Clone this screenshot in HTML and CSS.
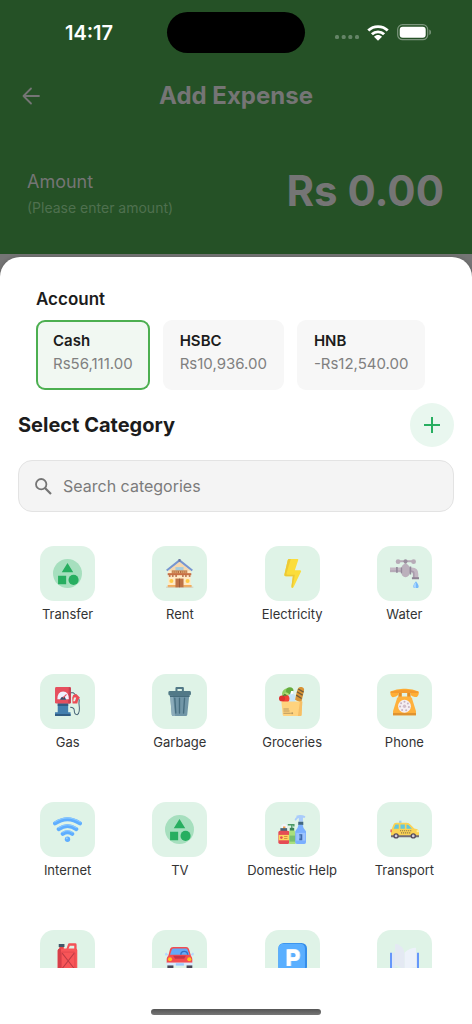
FILE: index.html
```html
<!DOCTYPE html>
<html lang="en">
<head>
<meta charset="utf-8">
<meta name="viewport" content="width=device-width, initial-scale=1">
<title>Add Expense</title>
<link rel="stylesheet" href="styles.css">
</head>
<body>
<div class="app">
  <header class="top">
    <div class="status">
      <span class="time">14:17</span>
      <span class="island"></span>
      <span class="signals">
        <svg width="24" height="5" viewBox="0 0 24 5" fill="#658467"><rect x="0" y="0" width="4" height="4" rx="1.5"/><rect x="6.700" width="4" height="4" rx="1.500"/><rect x="13.300" width="4" height="4" rx="1.500"/><rect x="20" width="4" height="4" rx="1.500"/></svg>
        <svg class="wifi" width="22" height="16" viewBox="0 0 22 16" fill="none" stroke="#fff" stroke-width="2.900"><path d="M1.300 5.500C6.700.3 15.300.3 20.700 5.500"/><path d="M4.900 9.300c3.400-3.300 8.800-3.300 12.200 0"/><path d="M7 11.700c2.200-2.200 5.800-2.200 8 0L11 15.700z" fill="#fff" stroke="none"/></svg>
        <svg width="35" height="17" viewBox="0 0 35 17"><rect x=".7" y=".7" width="30" height="15" rx="4.800" fill="none" stroke="#7c967d" stroke-width="1.200"/><rect x="2.700" y="2.700" width="26" height="11" rx="3" fill="#fff"/><path d="M32.300 5.500c2.200.7 2.200 4.800 0 5.500z" fill="#7c967d"/></svg>
      </span>
    </div>
    <div class="titlebar">
      <button class="back" type="button" aria-label="Back">
        <svg width="18" height="18" viewBox="0 0 18 18" fill="none" stroke="#757575" stroke-width="1.800" stroke-linecap="round" stroke-linejoin="round"><path d="M17 9H1.500M9 1.500 1.500 9 9 16.500"/></svg>
      </button>
      <h1>Add Expense</h1>
    </div>
    <div class="amount">
      <div><p class="amount-label">Amount</p><p class="amount-hint">(Please enter amount)</p></div>
      <strong class="amount-value">Rs 0.00</strong>
    </div>
  </header>

  <main class="sheet">
    <section class="accounts">
      <h2>Account</h2>
      <div class="account-list">
        <button type="button" class="account selected"><b>Cash</b><span>Rs56,111.00</span></button>
        <button type="button" class="account"><b>HSBC</b><span>Rs10,936.00</span></button>
        <button type="button" class="account"><b>HNB</b><span>-Rs12,540.00</span></button>
      </div>
    </section>
    <div class="category-head">
      <h2>Select Category</h2>
      <button class="add" type="button" aria-label="Add category">
        <svg width="16" height="16" viewBox="0 0 16 16" fill="none" stroke="#27ae60" stroke-width="2"><path d="M8 0v16M0 8h16"/></svg>
      </button>
    </div>
    <label class="search">
      <svg width="17" height="17" viewBox="0 0 17 17" fill="none" stroke="#757575" stroke-width="1.800"><circle cx="6.200" cy="6.200" r="5.200"/><path d="m10 10 6 6" stroke-width="2.200"/></svg>
      <input type="search" placeholder="Search categories" aria-label="Search categories">
    </label>

    <div class="grid">
      <button type="button" class="cat"><span class="tile">
        <svg viewBox="0 0 86 86"><circle cx="43" cy="43" r="43" fill="#a6dfbe"/><path d="M43 12 60 39H26zM15 50h24v25H15z" fill="#27ae60"/><circle cx="61" cy="62" r="15" fill="#27ae60"/></svg>
      </span>Transfer</button>
      <button type="button" class="cat"><span class="tile">
        <svg viewBox="0 0 86 86"><path d="M10 35 43 8l33 27v48H10z" fill="#ffe9c5"/><path d="M43 8 76 35H10z" fill="#f8d8ad"/><path d="M8 77h30v7H8zM54 77h25v7H54z" fill="#f5ad5a"/><path d="M3 83.500h81" stroke="#cbb7a5" stroke-width="2"/><path d="M31 24h24v10H31z" fill="#a7cddd"/><path d="M20 34h46v9H20z" fill="#b56d3f"/><path d="M24 36v6m6-6v6m6-6v6m7-6v6m7-6v6m6-6v6m6-6v6" stroke="#ffd59a" stroke-width="2"/><path d="M8 42h70v6H8z" fill="#c86f43"/><path d="M14 48v5m9-5v5m10-5v5m20-5v5m9-5v5m11-5v5" stroke="#a85a39" stroke-width="5"/><path d="M31 58h24v26H31z" fill="#bd7246"/><path d="M43 58v26" stroke="#8c5037" stroke-width="2"/><circle cx="19" cy="65" r="6" fill="#ffca45"/><circle cx="67" cy="65" r="6" fill="#ffca45"/><path d="M5 34 43 4l38 30" fill="none" stroke="#7896cf" stroke-width="6"/><path d="M40 0h6v8h-6z" fill="#6d789f"/></svg>
      </span>Rent</button>
      <button type="button" class="cat"><span class="tile">
        <svg viewBox="0 0 86 86"><path d="M33 0h25q3 0 2 3L50 33h15q5 0 3 5L46 84q-6 5-6-2l4-31H23q-5 0-4-5L29 3q1-3 4-3z" fill="#fbdd3b"/><path d="M33 0h5L25 43q-1 4 4 4h21l-7 38q-4 0-3-5l4-29H23q-5 0-4-5L29 3q1-3 4-3z" fill="#ecc936"/></svg>
      </span>Electricity</button>
      <button type="button" class="cat"><span class="tile">
        <svg viewBox="0 0 86 86"><path d="M24 7h43M46 7v17" stroke="#b7abb7" stroke-width="6"/><circle cx="24" cy="8" r="7" fill="#b7abb7"/><circle cx="70" cy="8" r="7" fill="#b7abb7"/><circle cx="46" cy="7" r="6" fill="#998d9d"/><path d="M0 25h65q19 0 19 20v12H68V44q0-5-7-5H0z" fill="#c2b7c2"/><path d="M0 37h61q7 0 7 7v13h5V42q0-8-9-8H0z" fill="#a99dad"/><ellipse cx="46" cy="34" rx="14" ry="20" fill="#bbb0bc"/><path d="M18 24h5v17h-5zM32 25h4v17h-4zM58 22h5v24h-5z" fill="#93889a"/><path d="M65 54h21v6H65z" fill="#8e8394"/><path d="M77 66q8 10 8 14a8 8 0 0 1-16 0q0-4 8-14z" fill="#76b9fa"/><path d="M77 70v17q-7-1-7-7 0-4 7-10z" fill="#a8d6ff"/></svg>
      </span>Water</button>

      <button type="button" class="cat"><span class="tile">
        <svg viewBox="0 0 86 86"><path d="M53 17h7l14 13q5 6 3 19 4 29-5 33-9 0-9-13 0-9-12-9" fill="none" stroke="#456276" stroke-width="3"/><path d="M14 48h31v27h7v11H6V75h8z" fill="#447fae"/><path d="M14 48h31v8H14zM6 80h46v6H6z" fill="#315d84"/><rect x="6" width="47" height="49" rx="4" fill="#e64f5e"/><path d="M47 1h3q3 0 3 4v40q0 4-4 4h-4z" fill="#c73f52"/><path d="M13 36q0-23 17-23t17 23z" fill="#f0f1ff"/><path d="M21 38q3-12 14-8l4 8z" fill="#324e6a"/><path d="m29 33 11-11" stroke="#e64f5e" stroke-width="3"/><path d="m60 24 9-3 11 11-5 5-3 12H58l-1-17z" fill="#ed4c55"/><path d="M62 31h7l-4 11h-5z" fill="#dff3e8"/></svg>
      </span>Gas</button>
      <button type="button" class="cat"><span class="tile">
        <svg viewBox="0 0 86 86"><path d="M15 24h57l-6 58q0 4-5 4H25q-5 0-5-4z" fill="#7196a7"/><path d="M15 24h8l7 62h-5q-5 0-5-4z" fill="#8cacba"/><path d="m29 33 3 44M43 33v44M58 33l-3 44" stroke="#466d7f" stroke-width="4" stroke-linecap="round"/><path d="M31 12V3q0-3 3-3h19q3 0 3 3v9h-6V6H37v6z" fill="#527987"/><rect x="10" y="12" width="67" height="13" rx="4" fill="#527987"/><path d="M14 25h59v5H15z" fill="#456b7a"/></svg>
      </span>Garbage</button>
      <button type="button" class="cat"><span class="tile">
        <svg viewBox="0 0 86 86"><circle cx="28" cy="20" r="16" fill="#8ccd61"/><circle cx="35" cy="12" r="11" fill="#64ac3e"/><circle cx="24" cy="25" r="9" fill="#b4df7a"/><path d="m50 38 8-31q4-9 13-7 8 2 6 11L69 47z" fill="#d99436"/><path d="m56 14 17 10M54 24l16 10M60 6l16 9" stroke="#705b3b" stroke-width="4"/><path d="m39 12-3 8-6 6v20h21V26l-5-6V12z" fill="#c7e5f8"/><path d="m39 12h7v7l-8 3z" fill="#fff"/><circle cx="22" cy="35" r="12" fill="#ef4136"/><circle cx="12" cy="34" r="9" fill="#dd312f"/><path d="m15 27 5-5 5 4" fill="none" stroke="#548b38" stroke-width="4"/><path d="M10 43h62l-2 40q0 3-4 3H18q-4 0-4-3z" fill="#ffd37e"/><path d="M65 43h7l-2 40q0 3-4 3h-7z" fill="#f6be65"/><path d="M16 65h16M16 71h18M16 78h22" stroke="#b9985e" stroke-width="3"/><circle cx="42" cy="78" r="3" fill="#b9985e"/></svg>
      </span>Groceries</button>
      <button type="button" class="cat"><span class="tile">
        <svg viewBox="0 0 86 86"><path d="M25 18h10v16H25zM51 18h10v16H51z" fill="#e38d23"/><path d="M27 28h32q4 0 6 5l12 38v13H9V71l12-38q2-5 6-5z" fill="#ffb13c"/><path d="M9 77h68v7H9z" fill="#df9330"/><path d="M1 13Q22 4 43 5q22-1 42 8 2 11-5 17-14 0-18-6l-1-6H25l-1 6q-6 7-18 6-6-5-5-17z" fill="#ffae35"/><path d="M3 13q40-9 80 0l1 5H2z" fill="#f49b2e"/><circle cx="43" cy="57" r="19" fill="#f4eef2"/><circle cx="43" cy="57" r="5" fill="#d2bec8"/><g fill="#c6b2bf"><circle cx="43" cy="44" r="3"/><circle cx="53" cy="49" r="3"/><circle cx="56" cy="59" r="3"/><circle cx="48" cy="69" r="3"/><circle cx="36" cy="68" r="3"/><circle cx="30" cy="58" r="3"/><circle cx="33" cy="48" r="3"/></g></svg>
      </span>Phone</button>

      <button type="button" class="cat"><span class="tile">
        <svg viewBox="0 0 86 86" fill="none" stroke="#5faeff" stroke-width="12" stroke-linecap="round"><path d="M6 25q37-25 74 0M17 42q26-19 52 0M29 56q14-10 28 0"/><path d="M5 21q38-24 76 0M16 38q27-18 54 0M29 51q14-8 28 0" stroke="#8cc9ff" stroke-width="3"/><circle cx="43" cy="72" r="8" fill="#5faeff" stroke="none"/><circle cx="41" cy="69" r="3" fill="#94ceff" stroke="none"/></svg>
      </span>Internet</button>
      <button type="button" class="cat"><span class="tile">
        <svg viewBox="0 0 86 86"><circle cx="43" cy="43" r="43" fill="#a6dfbe"/><path d="M43 12 60 39H26zM15 50h24v25H15z" fill="#27ae60"/><circle cx="61" cy="62" r="15" fill="#27ae60"/></svg>
      </span>TV</button>
      <button type="button" class="cat"><span class="tile">
        <svg viewBox="0 0 86 86"><path d="M10 40V31q8-10 17 0v9z" fill="#f0f5fb"/><path d="M15 34h7v7h-7z" fill="#f69c45"/><path d="M7 39h20v10H7z" fill="#4b6176"/><rect x="1" y="47" width="33" height="39" rx="5" fill="#e54b55"/><path d="M2 59h32v16H2z" fill="#ffd35e"/><circle cx="10" cy="67" r="4" fill="#e54b55"/><path d="M18 64h10m-10 6h10" stroke="#d88c42" stroke-width="3"/><path d="M31 31v-2h16v5M41 30v15" fill="none" stroke="#4a9865" stroke-width="4"/><path d="M35 38h13v10H35z" fill="#388155"/><path d="M35 46h14l4 10v26q0 4-4 4H33V53z" fill="#a9df7e"/><path d="M34 61h17v18H34z" fill="#78bf70"/><path d="M53 3q14-6 28 1l-1 4h-6v12H62V9q-5 0-9 8l-4-2q2-8 7-10z" fill="#a9ccfb"/><path d="M60 20h15v10H60z" fill="#426780"/><path d="M61 29h12q1 11 10 19v33q0 5-5 5H56q-5 0-5-5V48q8-7 10-19z" fill="#7aafff"/><path d="M54 53h27v23H54z" fill="#9bc3ff"/><path d="M63 57h9v18h-9z" fill="#3d68a9"/><path d="M65 60v10" stroke="#8dc1fa" stroke-width="3"/></svg>
      </span>Domestic Help</button>
      <button type="button" class="cat"><span class="tile">
        <svg viewBox="0 0 86 86"><path d="M27 17h7v7h-7z" fill="#9acdf5"/><path d="M3 47 10 29q2-6 8-6h32q6 0 11 6l11 11q13 2 15 9l-1 13H3z" fill="#fbd354"/><path d="m11 41 5-13h10v13zM31 28h13v13H31zM49 28q6 0 10 6l6 7H49z" fill="#63c6dc"/><path d="M3 60h83v6H3z" fill="#736d76"/><path d="M30 47h33m-30 6h27" stroke="#7a6a4a" stroke-width="3" stroke-dasharray="3 3"/><circle cx="18" cy="62" r="8" fill="#554a5c"/><circle cx="69" cy="62" r="8" fill="#554a5c"/><circle cx="18" cy="62" r="4" fill="#d4cedb"/><circle cx="69" cy="62" r="4" fill="#d4cedb"/><path d="M1 43h5v8H1z" fill="#ed7161"/><path d="M79 45h7v6h-7z" fill="#fff0a2"/></svg>
      </span>Transport</button>

      <button type="button" class="cat" aria-label="Fuel"><span class="tile">
        <svg viewBox="0 0 86 86"><path d="M17 3h17v9H17z" fill="#405768"/><path d="M19 12h13v8H19z" fill="#e8403f"/><path d="M39 20 44 5q1-4 5-4h17q4 0 4 4v16h-7V8H50l-5 12z" fill="#f35257"/><path d="M19 16h48q5 0 5 6v64H14V23q0-4 5-7z" fill="#f85558"/><path d="M14 22q0-5 5-6h5v70H14z" fill="#d73f49"/><rect x="25" y="27" width="40" height="51" rx="3" fill="none" stroke="#d9424b" stroke-width="2"/><path d="m27 30 36 46M63 30 27 76" stroke="#bd3b45" stroke-width="3"/></svg>
      </span></button>
      <button type="button" class="cat" aria-label="Vehicle"><span class="tile">
        <svg viewBox="0 0 86 86"><path d="M7 66h18v8H7zM64 66h17v8H64z" fill="#474656"/><path d="M1 37q-3-7 3-9l7 8zM84 37q4-7-2-9l-7 8z" fill="#b4d7ff"/><path d="M10 37 15 18q2-6 9-6h39q6 0 8 6l6 20q4 5 4 10v12H5V47q0-5 5-10z" fill="#f34c50"/><path d="M15 35 20 20q1-4 6-4h36q4 0 5 4l6 15z" fill="#62a9f8"/><path d="M47 35q0-10 10-10t10 10" fill="none" stroke="#316fc4" stroke-width="4"/><path d="M24 38h38l-5 9H30z" fill="#c43446"/><path d="M4 58h79v8H4z" fill="#d9eaff"/><path d="M32 60h24v7H32z" fill="#9bc9ff"/><circle cx="15" cy="48" r="6" fill="#ffc51f"/><circle cx="72" cy="48" r="6" fill="#ffc51f"/></svg>
      </span></button>
      <button type="button" class="cat" aria-label="Parking"><span class="tile">
        <svg viewBox="0 0 86 86"><rect x="1" width="85" height="86" rx="16" fill="#348de9"/><rect x="1" y="2" width="79" height="83" rx="14" fill="#5aafff"/><path d="M34 68V24h15q12 0 12 12t-12 12H34" fill="none" stroke="#d7e6f7" stroke-width="11"/><path d="M31 68V24h15q12 0 12 12T46 48H31" fill="none" stroke="#fff" stroke-width="11"/></svg>
      </span></button>
      <button type="button" class="cat" aria-label="Education"><span class="tile">
        <svg viewBox="0 0 86 86"><path d="M0 29h6v57H0zM80 29h6v57h-6z" fill="#6697fa"/><path d="M6 28h9v47q18-2 28 8 14-12 34-10V28h3v58H6z" fill="#dfe8f5"/><path d="M43 29q15-15 34-15v58q-20 0-34 12z" fill="#edf2fa"/><path d="M8 75q20-5 35 8 14-12 36-8v5q-22-2-36 6-14-8-35-6z" fill="#c3d3e6"/><path d="M15 4q8-3 15 4 11 6 13 24v50Q33 70 15 65z" fill="#e4e9f3"/></svg>
      </span></button>
    </div>
    <div class="bottom"><span class="home"></span></div>
  </main>
</div>
</body>
</html>
```
FILE: styles.css
```css
* { box-sizing: border-box; }
body { margin: 0; font-family: Inter, "Liberation Sans", sans-serif; color: #1c1c1c; background: #fff; }
h1, h2, p { margin: 0; }
button { margin: 0; padding: 0; border: 0; background: none; font: inherit; color: inherit; cursor: pointer; }
svg { display: block; flex: none; }

.app { display: flex; flex-direction: column; height: 100vh; overflow: hidden; background: #757575; }
.top { flex: none; background: #255126; margin-bottom: 3px; padding-bottom: 36px; }

.status { display: grid; grid-template-columns: 1fr 138px 1fr; align-items: center; padding-top: 12px; }
.time { padding: 0 0 0 11px; text-align: center; font-size: 20px; line-height: 24px; font-weight: 600; color: #fff; }
.island { height: 41px; border-radius: 21px; background: #000; }
.signals { display: flex; align-items: center; justify-content: flex-end; gap: 8px; padding-right: 40px; }
.signals svg:first-child { margin-top: 10px; }

.titlebar { display: grid; grid-template-columns: 44px 1fr 44px; align-items: center; margin-top: 27px; padding: 0 9px; }
.back { display: flex; align-items: center; justify-content: center; height: 32px; }
.titlebar h1 { text-align: center; font-size: 24px; line-height: 32px; font-weight: 700; color: #757575; }

.amount { display: flex; justify-content: space-between; align-items: flex-start; padding: 55px 28px 0 27px; }
.amount-label { margin-top: 3px; font-size: 18px; line-height: 24px; color: #757575; }
.amount-hint { margin-top: 4px; font-size: 14px; line-height: 20px; color: #4f704f; }
.amount-value { font-size: 42px; line-height: 48px; font-weight: 700; color: #757575; }

.sheet { flex: 1; min-height: 0; display: flex; flex-direction: column; background: #fff; border-radius: 20px 20px 0 0; box-shadow: 0 0 4px rgba(0, 0, 0, .2); }
.accounts { padding: 32px 36px 0; }
.accounts h2 { font-size: 17px; line-height: 20px; font-weight: 600; }
.account-list { display: flex; gap: 13px; margin-top: 11px; }
.account { display: flex; flex-direction: column; align-items: flex-start; flex: none; height: 70px; padding: 11px 17px; border-radius: 9px; background: #f7f7f7; font-size: 15px; line-height: 20px; white-space: nowrap; }
.account b { font-weight: 600; }
.account span { margin-top: 3px; color: #808080; }
.selected { background: #f1f8f2; box-shadow: inset 0 0 0 2px #4caf50; }

.category-head { display: flex; align-items: center; justify-content: space-between; padding: 13px 18px 0; }
.category-head h2 { font-size: 20px; line-height: 28px; font-weight: 700; }
.add { display: flex; align-items: center; justify-content: center; width: 44px; height: 44px; border-radius: 50%; background: #e9f7ef; }

.search { display: flex; align-items: center; gap: 11px; margin: 13px 18px 0; height: 52px; padding: 0 16px; border: 1px solid #e3e3e3; border-radius: 14px; background: #f4f4f4; }
.search input { flex: 1; min-width: 0; border: 0; outline: 0; padding: 0; background: none; font: inherit; font-size: 16px; line-height: 24px; appearance: none; }
.search input::placeholder { color: #7b7b7b; opacity: 1; }

.grid { flex: 1; min-height: 0; overflow: hidden; display: grid; grid-template-columns: repeat(4, 1fr); grid-auto-rows: 128px; column-gap: 13px; margin: 34px 18px 0; }
.cat { display: flex; flex-direction: column; align-items: center; gap: 4px; font-size: 13px; line-height: 18px; color: #333; white-space: nowrap; }
.tile { display: flex; align-items: center; justify-content: center; width: 55px; height: 55px; border-radius: 14px; background: #dff3e7; }
.tile svg { width: 29px; height: 29px; }
.bottom { flex: none; height: 56px; display: flex; align-items: flex-end; justify-content: center; padding-bottom: 9px; }
.home { width: 36%; height: 6px; border-radius: 3px; background: linear-gradient(#555, #777); }
```
